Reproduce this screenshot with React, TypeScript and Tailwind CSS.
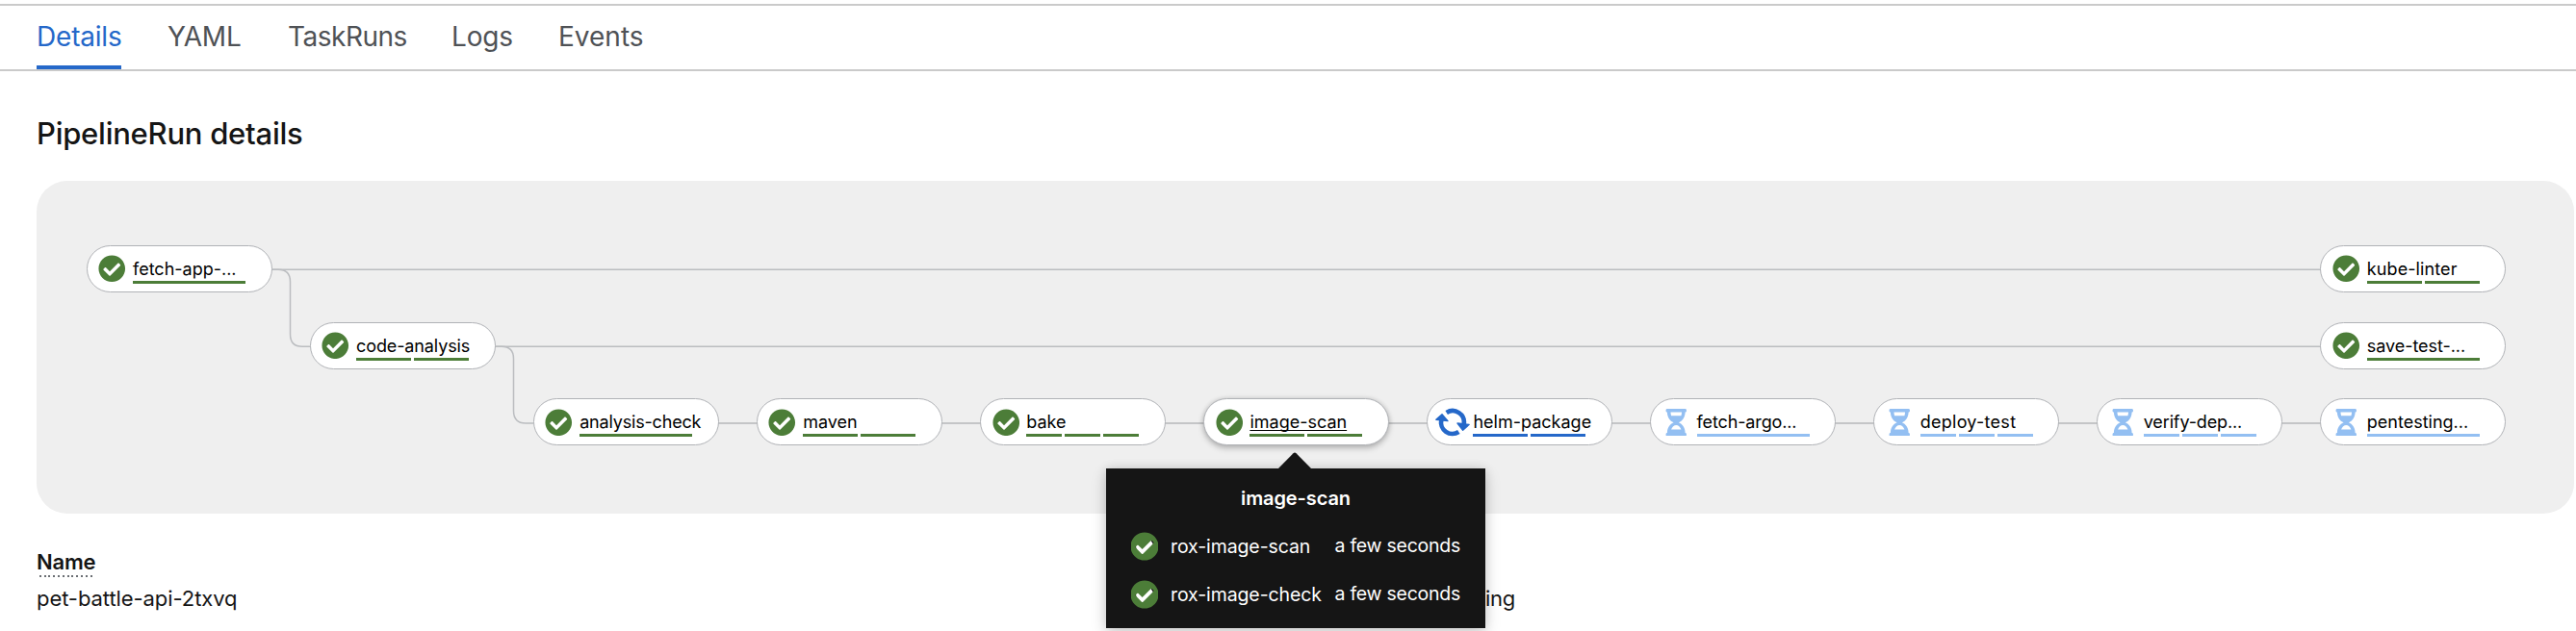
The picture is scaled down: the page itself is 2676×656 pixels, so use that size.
import { FaCheckCircle, FaHourglassHalf } from "react-icons/fa";

type Status = "done" | "running" | "pending";

interface PipelineNode {
  label: string;
  col: number;
  row: number;
  steps: number;
  status: Status;
  tracking?: string;
  selected?: boolean;
}

const nodes: PipelineNode[] = [
  { label: "fetch-app-...", col: 0, row: 0, steps: 1, status: "done" },
  { label: "code-analysis", col: 1, row: 1, steps: 2, status: "done", tracking: "tracking-[-0.12px]" },
  { label: "analysis-check", col: 2, row: 2, steps: 1, status: "done", tracking: "tracking-[-0.18px]" },
  { label: "maven", col: 3, row: 2, steps: 2, status: "done" },
  { label: "bake", col: 4, row: 2, steps: 3, status: "done" },
  { label: "image-scan", col: 5, row: 2, steps: 2, status: "done", selected: true },
  { label: "helm-package", col: 6, row: 2, steps: 2, status: "running" },
  { label: "fetch-argo...", col: 7, row: 2, steps: 1, status: "pending", tracking: "tracking-[-0.13px]" },
  { label: "deploy-test", col: 8, row: 2, steps: 3, status: "pending", tracking: "tracking-[0.28px]" },
  { label: "verify-dep...", col: 9, row: 2, steps: 3, status: "pending", tracking: "tracking-[-0.13px]" },
  { label: "kube-linter", col: 10, row: 0, steps: 2, status: "done", tracking: "tracking-[0.1px]" },
  { label: "save-test-...", col: 10, row: 1, steps: 1, status: "done", tracking: "tracking-[-0.05px]" },
  { label: "pentesting...", col: 10, row: 2, steps: 1, status: "pending" },
];

const tabs = [
  { label: "Details", cls: "w-[88px] tracking-[-0.2px]", active: true },
  { label: "YAML", cls: "w-[77px] tracking-[-0.2px]" },
  { label: "TaskRuns", cls: "w-[122px] tracking-[-0.5px]" },
  { label: "Logs", cls: "w-[63px] tracking-[-0.2px]" },
  { label: "Events", cls: "w-[88px]" },
];

const stepColor: Record<Status, string> = {
  done: "bg-[#4c7d38]",
  running: "bg-[#2568c9]",
  pending: "bg-[#93bff2]",
};

const nodeLeft = (col: number) => 51.5 + col * 232.08;
const nodeTop = (row: number) => 67 + row * 79.6;

function CheckIcon({ className }: { className: string }) {
  return (
    <span className={`relative flex shrink-0 items-center justify-center ${className}`}>
      <span className="absolute inset-[20%] rounded-full bg-white" />
      <FaCheckCircle className="relative size-full shrink-0 text-[#4c7d38]" />
    </span>
  );
}

function SyncIcon() {
  return (
    <svg viewBox="34 74 108 90" className="h-[30px] w-9 shrink-0">
      <g fill="none" stroke="#2568c9" strokeWidth="14">
        <path d="M69 89A35.500 35.500 0 0 1 123 125" />
        <path d="M107 149A35.500 35.500 0 0 1 53 111" />
      </g>
      <g fill="#2568c9" stroke="#2568c9" strokeWidth="4" strokeLinejoin="round">
        <path d="M103 122L139.500 126L120 144Z" />
        <path d="M73 115L36.500 111L55 94Z" />
      </g>
    </svg>
  );
}

function StatusIcon({ status }: { status: Status }) {
  if (status === "running") return <SyncIcon />;
  if (status === "pending") return <FaHourglassHalf className="size-[28.500px] shrink-0 text-[#93bff2]" />;
  return <CheckIcon className="size-[28.500px]" />;
}

function Node({ node }: { node: PipelineNode }) {
  return (
    <div
      className={`absolute flex h-[49.300px] w-[193.200px] items-center rounded-full border border-[#b0b2b6] bg-white ${
        node.selected ? "shadow-[0_3px_6px_rgba(0,0,0,0.22),0_0_5px_rgba(0,0,0,0.12)]" : ""
      }`}
      style={{ left: nodeLeft(node.col), top: nodeTop(node.row) }}
    >
      <div className="flex w-[47.500px] shrink-0 justify-center pl-[4.500px]">
        <StatusIcon status={node.status} />
      </div>
      <div className="relative w-[117px]">
        <div
          className={`text-[18px] leading-[27px] whitespace-nowrap text-black ${node.tracking ?? ""} ${
            node.selected ? "underline decoration-1 underline-offset-2 [text-decoration-skip-ink:none]" : ""
          }`}
        >
          {node.label}
        </div>
        <div className="absolute top-[26px] left-0 flex h-[3px] w-full gap-[3px]">
          {Array.from({ length: node.steps }, (_, i) => (
            <span key={i} className={`h-full flex-1 ${stepColor[node.status]}`} />
          ))}
        </div>
      </div>
    </div>
  );
}

function Links() {
  return (
    <svg className="absolute inset-0 size-full" fill="none" stroke="#bbbdc0" strokeWidth="1.500">
      <path d="M244 92.300H2373" />
      <path d="M244 92.300H251Q263.500 92.300 263.500 105V159.500Q263.500 172.300 276 172.300H284" />
      <path d="M476 172.300H2373" />
      <path d="M476 172.300H483Q495.500 172.300 495.500 185V239Q495.500 252 508 252H516" />
      <path d="M540 252H2373" stroke="#c4c5c7" strokeWidth="2" />
    </svg>
  );
}

function TooltipRow({ name, cls }: { name: string; cls: string }) {
  return (
    <div className="flex h-[50px] items-center pl-[26px]">
      <span className="flex w-[27.500px] shrink-0 justify-center overflow-hidden">
        <CheckIcon className="size-[30px]" />
      </span>
      <span className={`ml-[13.500px] w-[170.500px] shrink-0 whitespace-nowrap ${cls}`}>{name}</span>
      <span className="tracking-[-0.25px] whitespace-nowrap">a few seconds</span>
    </div>
  );
}

function Tooltip() {
  return (
    <div className="absolute top-[299px] left-[1111px] h-[166px] w-[394px] bg-[#151515] text-[19.500px] font-[430] text-white shadow-[0_6px_16px_rgba(0,0,0,0.16),0_0_10px_rgba(0,0,0,0.12)]">
      <svg viewBox="0 0 34 17" className="absolute -top-[17px] left-[179px] h-[17px] w-[34px]">
        <path d="M0 17L15.500 1.200Q17 0 18.500 1.200L34 17Z" fill="#151515" />
      </svg>
      <div className="h-[56px] pt-[16px] text-center text-[20px] leading-[30px] font-semibold tracking-[-0.1px]">
        image-scan
      </div>
      <TooltipRow name="rox-image-scan" cls="pt-px tracking-[-0.1px]" />
      <TooltipRow name="rox-image-check" cls="pt-px tracking-[-0.1px]" />
    </div>
  );
}

export default function App() {
  return (
    <div className="h-[656px] overflow-hidden bg-white pt-1 font-['Inter',sans-serif] text-[#151515]">
      <nav className="flex h-[70px] gap-12 border-y-2 border-[#cacaca] pl-[38px]">
        {tabs.map((tab) => (
          <div
            key={tab.label}
            className={`flex h-full items-center border-b-4 pt-[2px] text-[28px] whitespace-nowrap ${tab.cls} ${
              tab.active ? "border-[#2568c9] text-[#2568c9]" : "border-transparent text-[#4f5256]"
            }`}
          >
            {tab.label}
          </div>
        ))}
      </nav>

      <h2 className="h-[114px] pt-[45px] pl-[38px] text-[31px] leading-[40px] font-medium tracking-[-0.25px]">
        PipelineRun details
      </h2>

      <section className="relative ml-[38px] h-[346px] w-[2636px] rounded-[32px] bg-[#efefef]">
        <Links />
        {nodes.map((node) => (
          <Node key={node.label} node={node} />
        ))}
        <Tooltip />
      </section>

      <dl className="grid grid-cols-[1505px_1fr] pt-[34px] pl-[38px] text-[22px] leading-[33px]">
        <div>
          <dt className="w-[59px] leading-[32px] font-semibold tracking-[-0.2px]">
            <span className="block h-[30px] whitespace-nowrap">Name</span>
            <span className="block h-[2px] bg-[repeating-linear-gradient(90deg,transparent_0_2.800px,#6a6e73_2.800px_4.800px)]" />
          </dt>
          <dd className="mt-[6px] tracking-[-0.07px]">pet-battle-api-2txvq</dd>
        </div>
        <div className="pt-[38px] tracking-[-0.3px]">ing</div>
      </dl>
    </div>
  );
}
